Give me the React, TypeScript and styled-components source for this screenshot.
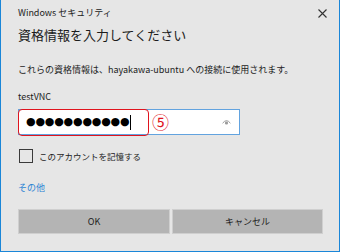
import styled, { createGlobalStyle } from "styled-components";

const Global = createGlobalStyle`
  html, body {
    margin: 0;
    padding: 0;
    background: #e6e6e6;
  }
  body {
    font-family: "Noto Sans CJK JP", "Noto Sans", sans-serif;
  }
`;

const Dialog = styled.div`
  box-sizing: border-box;
  width: 340px;
  height: 252px;
  background: #e6e6e6;
  border: 1px solid #1a86d8;
  border-top: none;
  padding: 0 0 0 17px;
  color: #1f1f1f;
  display: flex;
  flex-direction: column;
`;

const Header = styled.div`
  display: flex;
  align-items: center;
  justify-content: space-between;
  height: 26px;
  padding-right: 11px;
`;

const Caption = styled.div`
  font-size: 9px;
  line-height: 14px;
  color: #222;
`;

const CloseButton = styled.svg`
  width: 11px;
  height: 11px;
  display: block;
`;

const Title = styled.h1`
  margin: 0;
  font-size: 13px;
  font-weight: 400;
  line-height: 18px;
  color: #1c1c1c;
`;

const Message = styled.p`
  margin: 19px 0 0;
  font-size: 9px;
  line-height: 14px;
  color: #1c1c1c;
`;

const UserName = styled.div`
  margin-top: 13px;
  font-size: 9px;
  line-height: 14px;
  color: #1c1c1c;
`;

const InputBox = styled.div`
  position: relative;
  box-sizing: border-box;
  margin-top: 5px;
  width: 222px;
  height: 26px;
  background: #fff;
  border: 1px solid #62a3df;
  display: flex;
  align-items: center;
  padding-left: 7px;
`;

const Dots = styled.span`
  font-family: "DejaVu Sans", sans-serif;
  font-size: 11px;
  letter-spacing: -0.2px;
  color: #000;
  line-height: 14px;
`;

const Caret = styled.span`
  width: 1px;
  height: 15px;
  background: #000;
  margin-left: 1px;
`;

const Highlight = styled.div`
  position: absolute;
  left: -1px;
  top: -1px;
  width: 131px;
  height: 27px;
  box-sizing: border-box;
  border: 1px solid #e0141e;
  border-radius: 4px;
`;

const Marker = styled.span`
  position: absolute;
  left: 133px;
  top: 1px;
  font-size: 17px;
  line-height: 22px;
  color: #e0141e;
`;

const Eye = styled.svg`
  position: absolute;
  right: 8px;
  top: 9px;
  width: 9px;
  height: 6px;
`;

const CheckRow = styled.label`
  display: flex;
  align-items: center;
  gap: 6px;
  margin-top: 14px;
  font-size: 8.5px;
  line-height: 14px;
  color: #1c1c1c;
`;

const Box = styled.span`
  box-sizing: border-box;
  width: 14px;
  height: 14px;
  margin-left: 1px;
  border: 1.5px solid #3a3a3a;
`;

const MoreLink = styled.a`
  margin-top: 18px;
  font-size: 9px;
  line-height: 14px;
  color: #2b83d4;
  text-decoration: none;
`;

const Buttons = styled.div`
  display: flex;
  gap: 2px;
  margin-top: 14px;
  width: 305px;
`;

const Button = styled.button<{ $wide?: boolean }>`
  box-sizing: border-box;
  width: ${(p) => (p.$wide ? "152px" : "151px")};
  height: 25px;
  background: #b4b4b4;
  border: 1px solid #cfcfcf;
  font-family: "Noto Sans CJK JP", "Noto Sans", sans-serif;
  font-size: 9px;
  color: #1c1c1c;
  padding: 0;
`;

export default function App() {
  return (
    <>
      <Global />
      <Dialog>
        <Header>
          <Caption>Windows セキュリティ</Caption>
          <CloseButton viewBox="0 0 11 11">
            <path d="M1.5 1.5 L9.5 9.5 M9.5 1.5 L1.5 9.5" stroke="#333" strokeWidth="1.1" />
          </CloseButton>
        </Header>
        <Title>資格情報を入力してください</Title>
        <Message>これらの資格情報は、hayakawa-ubuntu への接続に使用されます。</Message>
        <UserName>testVNC</UserName>
        <InputBox>
          <Dots>●●●●●●●●●●●</Dots>
          <Caret />
          <Highlight />
          <Marker>⑤</Marker>
          <Eye viewBox="0 0 9 6">
            <path d="M0.6 4.2 Q4.5 -0.8 8.4 4.2" fill="none" stroke="#9a9a9a" strokeWidth="1" />
            <circle cx="4.5" cy="4" r="1.6" fill="#9a9a9a" />
          </Eye>
        </InputBox>
        <CheckRow>
          <Box />
          このアカウントを記憶する
        </CheckRow>
        <MoreLink href="#">その他</MoreLink>
        <Buttons>
          <Button $wide>OK</Button>
          <Button>キャンセル</Button>
        </Buttons>
      </Dialog>
    </>
  );
}
